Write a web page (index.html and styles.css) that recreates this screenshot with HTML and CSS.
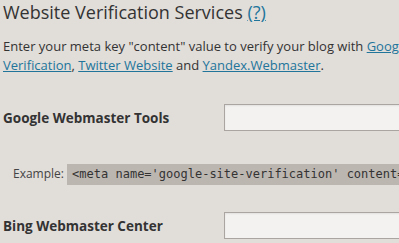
FILE: index.html
```html
<!DOCTYPE html>
<html>
<head>
<title>Website Verification Services</title>
<link rel="stylesheet" href="styles.css">
</head>
<body>
  <h2 class="title">Website Verification Services <a href="#">(?)</a></h2>
  <p class="intro">
    Enter your meta key "content" value to verify your blog with <a href="#">Google Webmaster Tools</a>, <a href="#">Bing Webmaster Center</a>, <a href="#">Pinterest Site</a><br>
    <a href="#">Verification</a>, <a href="#">Twitter Website</a> and <a href="#">Yandex.Webmaster</a>.
  </p>

  <div class="row">
    <label class="label">Google Webmaster Tools</label>
    <input class="field" type="text">
  </div>
  <div class="example">
    Example: <code class="code">&lt;meta name='google-site-verification' content='dBw5CvburAxi537Rp9qi5uG2174Vb6JwHwIRwPSLIK8'&gt;</code>
  </div>

  <div class="row row-next">
    <label class="label">Bing Webmaster Center</label>
    <input class="field" type="text">
  </div>
</body>
</html>
```

FILE: styles.css
```css
body{
  margin: 0;
  padding: 0 0 0 3px;
  background-color: #e1ddd9;
  color: #333333;
  font-family: "Open Sans", sans-serif;
  width: 1000px;
  overflow: hidden;
}
a{
  color: #21759b;
}
.title{
  font-size: 18px;
  font-weight: normal;
  margin: 0;
  line-height: 24px;
}
.intro{
  font-size: 13px;
  line-height: 19px;
  margin: 13px 0 0 0;
  white-space: nowrap;
}
.row{
  display: flex;
  align-items: center;
  margin-top: 29px;
}
.row-next{
  margin-top: 27px;
}
.label{
  width: 221px;
  font-size: 13.5px;
  font-weight: bold;
}
.field{
  width: 400px;
  height: 27px;
  box-sizing: border-box;
  border: 1px solid #aaa5a0;
  background-color: #f3f2f1;
  box-shadow: inset 0 1px 2px rgba(0,0,0,0.07);
  margin: 0;
}
.example{
  margin-top: 32px;
  padding-left: 10px;
  font-size: 12px;
  color: #444444;
  white-space: nowrap;
  line-height: 21px;
}
.code{
  font-family: "DejaVu Sans Mono", monospace;
  font-size: 12px;
  background-color: #bcb6b1;
  padding: 3px 5px 4px;
  color: #333333;
}
```
